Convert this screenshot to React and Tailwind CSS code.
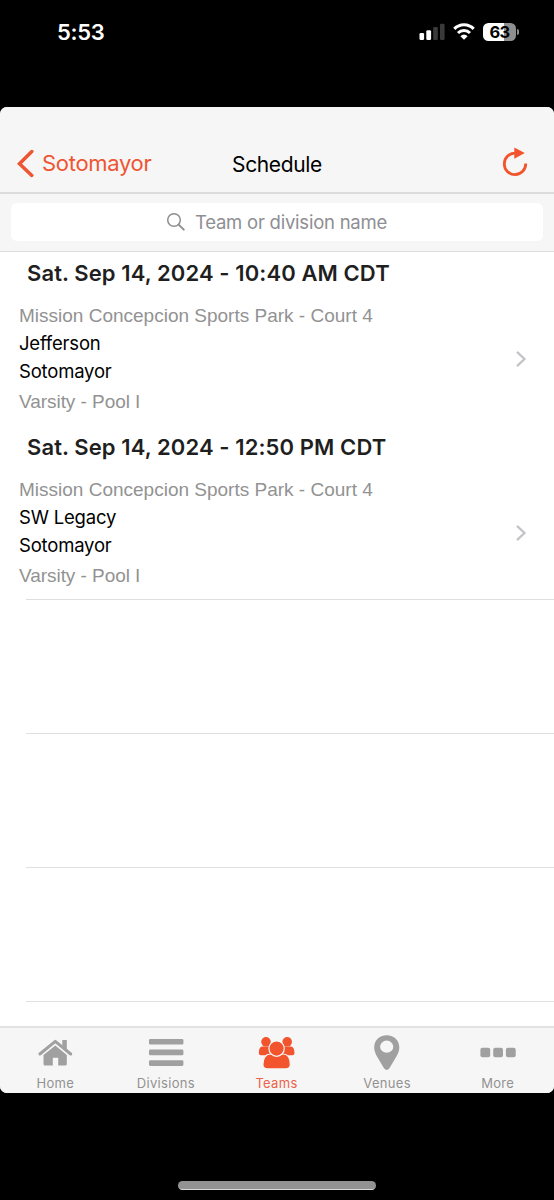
import React from 'react';

const games = [
  {
    time: 'Sat. Sep 14, 2024 - 10:40 AM CDT',
    venue: 'Mission Concepcion Sports Park - Court 4',
    home: 'Jefferson',
    away: 'Sotomayor',
    pool: 'Varsity - Pool I',
  },
  {
    time: 'Sat. Sep 14, 2024 - 12:50 PM CDT',
    venue: 'Mission Concepcion Sports Park - Court 4',
    home: 'SW Legacy',
    away: 'Sotomayor',
    pool: 'Varsity - Pool I',
  },
];

function StatusBar() {
  return (
    <div className="flex h-[107px] shrink-0 items-start justify-between pl-[57px] pr-[35px] text-white">
      <span className="mt-[18px] text-[22px] leading-7 font-semibold tracking-[-0.35px]">5:53</span>
      <div className="mt-[22px] flex h-[19px] items-center">
        <svg width="26" height="17" viewBox="0 0 26 17" className="mr-[8px]">
          <rect x="0.5" y="10" width="4.6" height="7" rx="1.3" fill="#fff" />
          <rect x="7.3" y="7.3" width="4.8" height="9.7" rx="1.3" fill="#fff" />
          <rect x="14.2" y="4" width="4.6" height="13" rx="1.3" fill="#3a3a3a" />
          <rect x="21" y="0.7" width="4.6" height="16.3" rx="1.3" fill="#3a3a3a" />
        </svg>
        <svg width="22" height="17" viewBox="0 0 22 17" className="mr-[8px]" fill="none">
          <path d="M1.3 5.8A13.6 13.6 0 0 1 20.7 5.8" stroke="#fff" strokeWidth="3.1" />
          <path d="M5 10A8.3 8.3 0 0 1 17 10" stroke="#fff" strokeWidth="2.9" />
          <path d="M11 16.8 7.4 13.2A4.8 4.8 0 0 1 14.6 13.2Z" fill="#fff" />
        </svg>
        <div className="flex h-[18px] w-[33px] items-center justify-center rounded-[5.5px] bg-[linear-gradient(to_right,#fff_63%,#8e8e8e_63%)] pt-px text-[16.5px] leading-none font-bold tracking-[-0.6px] text-black">
          63
        </div>
        <div className="ml-px h-[6px] w-[2px] rounded-r-full bg-[#8e8e8e]" />
      </div>
    </div>
  );
}

function NavBar() {
  return (
    <div className="grid h-[87px] shrink-0 grid-cols-3 border-b-2 border-[#dcdcdc] bg-[#f6f6f6] pt-[28px]">
      <div className="flex h-[57px] items-center pl-[17px] text-[#ee5533]">
        <svg width="18" height="29" viewBox="0 0 18 29" fill="none">
          <path d="M14.8 2.5 2.5 14.7 14.8 26.4" stroke="#ee5533" strokeWidth="3.5" strokeLinecap="round" strokeLinejoin="miter" />
        </svg>
        <span className="ml-[7px] text-[22px] tracking-[-0.3px]">Sotomayor</span>
      </div>
      <div className="flex h-[57px] items-center justify-center pt-[2px] text-[21px] tracking-[-0.35px] text-black">
        Schedule
      </div>
      <div className="flex h-[57px] items-center justify-end pr-[25px] pb-[3px]">
        <svg width="28" height="32" viewBox="0 0 28 32" fill="none">
          <path d="M14.5 7.2A10.7 10.7 0 1 0 24.7 17.5" stroke="#f2542d" strokeWidth="2.8" />
          <path d="M13.3 1.5V12.7L23.8 6.9Z" fill="#f2542d" />
        </svg>
      </div>
    </div>
  );
}

function SearchBar() {
  return (
    <div className="h-[58px] shrink-0 border-b border-[#dddddd] bg-[#f6f6f6] px-[11px] pt-[9px]">
      <div className="flex h-[38px] items-center justify-center rounded-[6px] bg-white pr-px text-[#8e8e93]">
        <svg width="20" height="20" viewBox="0 0 20 20" fill="none" stroke="#8e8e93" className="mr-[9px]">
          <circle cx="8" cy="8" r="6.3" strokeWidth="1.5" />
          <path d="m12.6 12.6 5.2 5" strokeWidth="2" strokeLinecap="round" />
        </svg>
        <span className="pt-[2px] text-[18.5px] tracking-[-0.23px]">Team or division name</span>
      </div>
    </div>
  );
}

function GameRow({ game, last }) {
  return (
    <div>
      <h2 className="flex h-[42px] items-center pl-[27px] text-[22px] font-semibold tracking-[0.1px] whitespace-nowrap text-[#1f1f1f]">
        {game.time}
      </h2>
      <div className="flex h-[132px] items-center justify-between pr-[27px] pb-[2px] pl-[19px]">
        <div className="whitespace-nowrap">
          <p className="h-[27px] font-['Liberation_Sans',sans-serif] text-[19px] leading-[28px] text-[#929292]">{game.venue}</p>
          <p className="h-[28px] text-[18.5px] leading-[28px] tracking-[-0.2px] text-black">{game.home}</p>
          <p className="h-[30px] text-[18.5px] leading-[28px] tracking-[-0.2px] text-black">{game.away}</p>
          <p className="h-[29px] font-['Liberation_Sans',sans-serif] text-[19px] leading-[29px] tracking-[-0.05px] text-[#929292]">{game.pool}</p>
        </div>
        <svg width="12" height="18" viewBox="0 0 12 18" fill="none">
          <path d="M2 1.8 9.5 9 2 16.2" stroke="#c4c4c8" strokeWidth="2.3" />
        </svg>
      </div>
      {last && <div className="-mt-px ml-[26px] h-px bg-[#dedede]" />}
    </div>
  );
}

function Tab({ label, active, children }) {
  return (
    <div className={active ? 'flex flex-1 flex-col items-center text-[#f2542d]' : 'flex flex-1 flex-col items-center text-[#a0a0a0]'}>
      <div className="flex h-[46px] w-[40px] items-center justify-center">{children}</div>
      <span className={active ? 'text-[13px] leading-[18px] tracking-[0.3px] text-[#ec6248]' : 'text-[13px] leading-[18px] tracking-[0.3px] text-[#929292]'}>
        {label}
      </span>
    </div>
  );
}

function TabBar() {
  return (
    <div className="flex h-[67px] shrink-0 border-t-2 border-[#e2e2e2] bg-[#f6f6f6] pr-[1px]">
      <Tab label="Home">
        <svg width="40" height="46" viewBox="0 0 40 46" fill="currentColor">
          <path d="M4.9 26 20.3 13.4 35.7 26" fill="none" stroke="currentColor" strokeWidth="3" strokeLinecap="round" strokeLinejoin="round" />
          <path d="M27.3 12H31.8V21.5L27.3 17.8Z" />
          <path d="M20.3 17.5 31.8 27V36Q31.8 37.5 30.3 37.5H23.2V29.7H17.8V37.5H10Q8.5 37.5 8.5 36V27Z" />
        </svg>
      </Tab>
      <Tab label="Divisions">
        <svg width="40" height="46" viewBox="0 0 40 46" fill="currentColor">
          <rect x="3" y="11" width="34.4" height="5.6" rx="1.3" />
          <rect x="3" y="21.6" width="34.4" height="5.6" rx="1.3" />
          <rect x="3" y="32.3" width="34.4" height="5.6" rx="1.3" />
        </svg>
      </Tab>
      <Tab label="Teams" active>
        <svg width="40" height="46" viewBox="0 0 40 46" fill="currentColor">
          <circle cx="10" cy="13.8" r="4.8" />
          <circle cx="31.2" cy="13.8" r="4.8" />
          <path d="M5.8 18.6Q2.9 19.5 2.9 24.5V25.3Q2.9 27.3 4.9 27.3H16V18.6Z" />
          <path d="M35.4 18.6Q38.4 19.5 38.4 24.5V25.3Q38.4 27.3 36.4 27.3H24V18.6Z" />
          <g stroke="#f6f6f6" strokeWidth="1.2">
            <path d="M14.3 26H26.9C31.5 26 34.3 30 34.3 36.5Q34.3 40.9 29.7 40.9H11.5Q6.9 40.9 6.9 36.5C6.9 30 9.7 26 14.3 26Z" />
            <circle cx="20.6" cy="20.6" r="7.7" />
          </g>
        </svg>
      </Tab>
      <Tab label="Venues">
        <svg width="40" height="46" viewBox="0 0 40 46" fill="currentColor">
          <path fillRule="evenodd" d="M19.7 7.2C12.3 7.2 7.2 12.4 7.2 19.4C7.2 23 8.6 25.8 10.6 29.5L17 40.3Q19.7 43.5 22.4 40.3L28.8 29.5C30.9 25.8 32.3 23 32.3 19.4C32.3 12.4 27.1 7.2 19.7 7.2ZM19.7 12.6A6.6 6.1 0 1 1 19.7 24.8A6.6 6.1 0 1 1 19.7 12.6Z" />
        </svg>
      </Tab>
      <Tab label="More">
        <svg width="40" height="46" viewBox="0 0 40 46" fill="currentColor">
          <rect x="2.4" y="19.8" width="9.8" height="9.4" rx="2" />
          <rect x="15.2" y="19.8" width="9.8" height="9.4" rx="2" />
          <rect x="27.9" y="19.8" width="9.8" height="9.4" rx="2" />
        </svg>
      </Tab>
    </div>
  );
}

function App() {
  return (
    <div className="flex h-[1200px] w-[554px] flex-col bg-black font-['Inter',sans-serif]">
      <StatusBar />
      <div className="flex h-[986px] shrink-0 flex-col overflow-hidden rounded-[7px] bg-white">
        <NavBar />
        <SearchBar />
        <div className="flex-1 overflow-hidden">
          {games.map((game, i) => (
            <GameRow key={game.time} game={game} last={i === games.length - 1} />
          ))}
          {/* empty table rows */}
          <div className="ml-[26px] h-[134px] border-b border-[#e0e0e0]" />
          <div className="ml-[26px] h-[134px] border-b border-[#e0e0e0]" />
          <div className="ml-[26px] h-[134px] border-b border-[#e0e0e0]" />
        </div>
        <TabBar />
      </div>
      {/* home indicator */}
      <div className="mx-auto mt-[88px] h-[9px] w-[198px] rounded-full border-b border-[#d8d8d8] bg-[#929292]" />
    </div>
  );
}

export default App;
